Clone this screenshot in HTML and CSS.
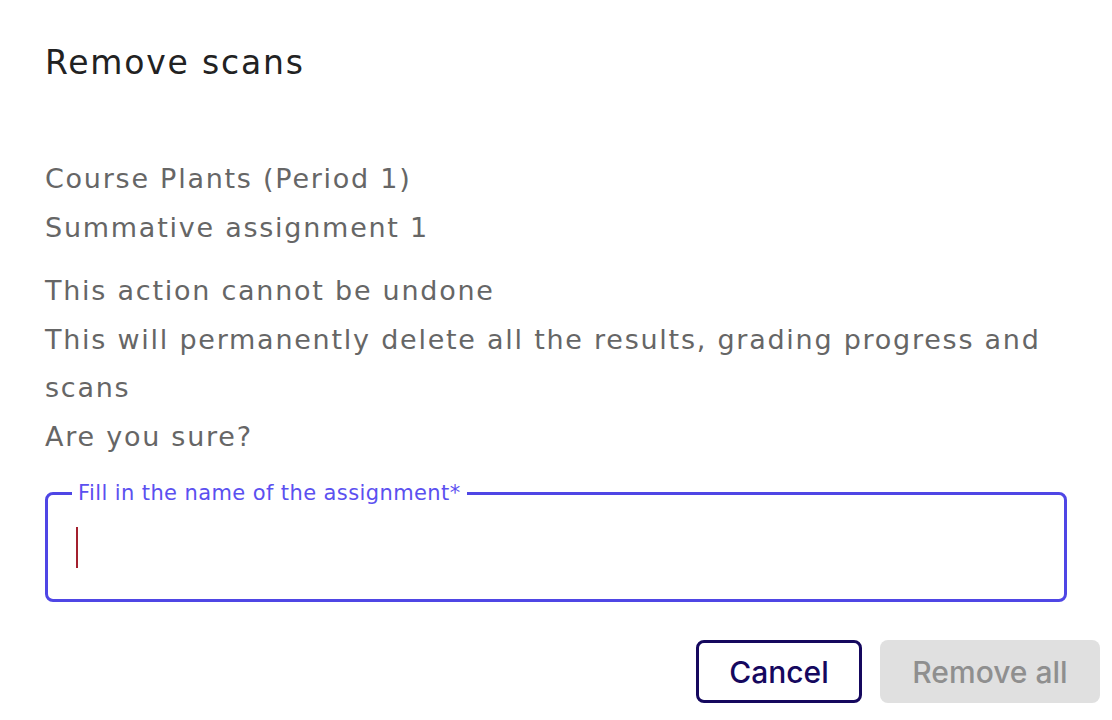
FILE: index.html
```html
<!DOCTYPE html>
<html lang="en">
<head>
  <meta charset="UTF-8" />
  <title>Remove scans</title>
  <link rel="stylesheet" href="styles.css">
</head>
<body>
  <div class="dialogo">
    <h1 class="titulo">Remove scans</h1>

    <div class="info">
      <p>Course Plants (Period 1)<br>Summative assignment 1</p>
      <p class="aviso">This action cannot be undone<br>This will permanently delete all the results, grading progress and scans<br>Are you sure?</p>
    </div>

    <div class="campo">
      <label class="campo-label" for="nomeTarefa">Fill in the name of the assignment*</label>
      <span class="cursor"></span>
      <input type="text" id="nomeTarefa" />
    </div>

    <div class="acoes">
      <button class="btn-cancelar">Cancel</button>
      <button class="btn-remover" disabled>Remove all</button>
    </div>
  </div>
</body>
</html>
```

FILE: styles.css
```css
:root {
  --roxo: #4f46e5;
  --roxo-label: #5b50f0;
  --marinho: #15085e;
  --texto: #666666;
  --titulo: #222222;
  --cinza: #e0e0e0;
}
* {
  box-sizing: border-box;
}
body {
  margin: 0;
  background: white;
  font-family: 'DejaVu Sans', sans-serif;
}
.dialogo {
  padding: 37px 45px 0 45px;
}
.titulo {
  margin: 0;
  font-size: 33px;
  line-height: 52px;
  font-weight: 400;
  letter-spacing: 1.8px;
  color: var(--titulo);
}
.info {
  margin-top: 66px;
  color: var(--texto);
  font-size: 27px;
  line-height: 48.5px;
  letter-spacing: 1.75px;
}
.info p {
  margin: 0;
}
.info .aviso {
  margin-top: 15px;
}
.campo {
  position: relative;
  margin-top: 31px;
  height: 110px;
  border: 3px solid var(--roxo);
  border-radius: 8px;
  padding: 32px 0 0 28px;
}
.campo-label {
  position: absolute;
  top: -15px;
  left: 24px;
  padding: 0 6px;
  background: white;
  color: var(--roxo-label);
  font-size: 21px;
  line-height: 26px;
  letter-spacing: 0.4px;
}
.campo input {
  position: absolute;
  left: 0;
  top: 0;
  width: 100%;
  height: 100%;
  border: none;
  background: transparent;
  outline: none;
  opacity: 0;
}
.cursor {
  display: block;
  width: 2px;
  height: 41px;
  background: #a3202e;
}
.acoes {
  display: flex;
  justify-content: flex-end;
  gap: 18px;
  margin: 38px -33px 0 0;
}
.acoes button {
  height: 63px;
  border-radius: 8px;
  font-family: 'Inter', sans-serif;
  font-weight: 500;
  font-size: 30px;
  cursor: pointer;
}
.btn-cancelar {
  width: 166px;
  background: white;
  border: 3px solid var(--marinho);
  color: var(--marinho);
}
.btn-remover {
  width: 220px;
  background: var(--cinza);
  border: none;
  color: #8f8f8f;
}
```
